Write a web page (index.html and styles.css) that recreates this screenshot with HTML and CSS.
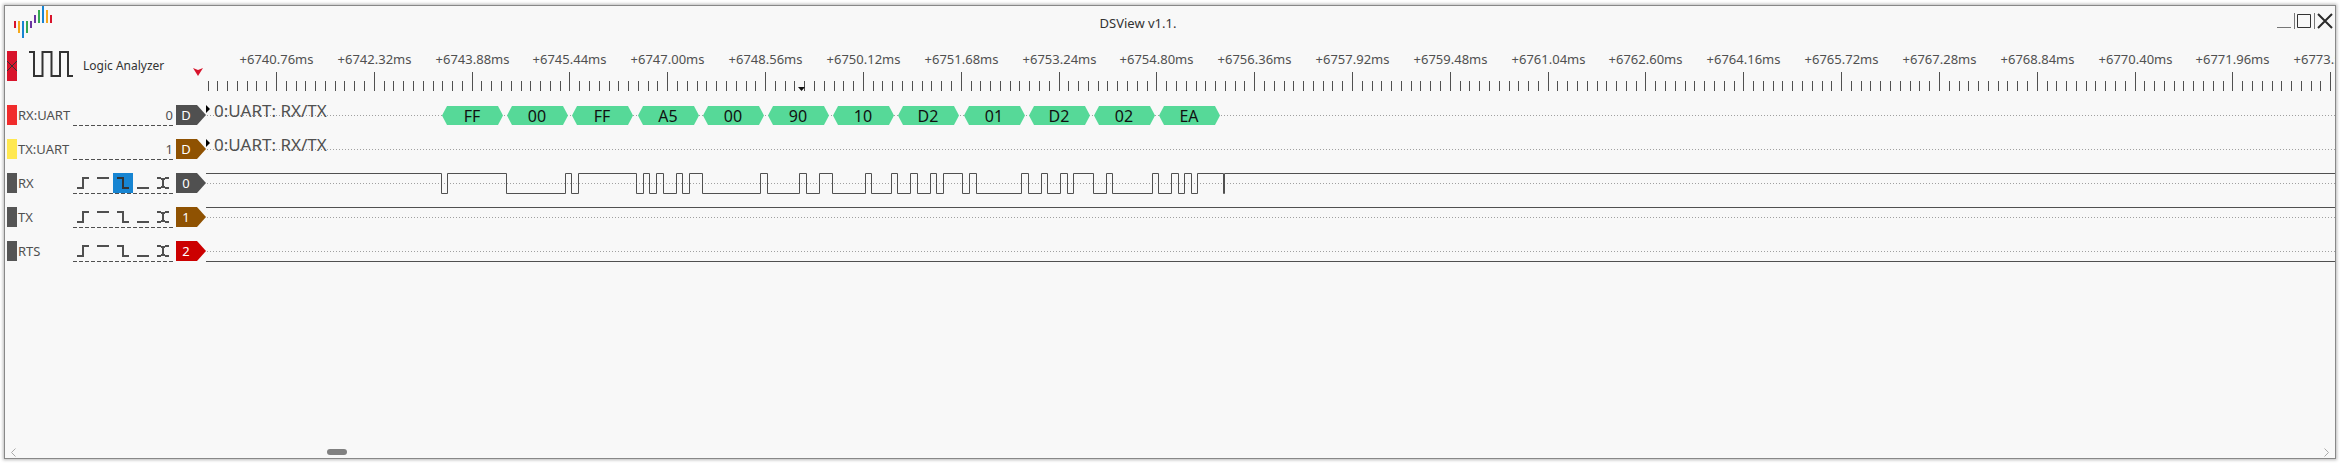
FILE: index.html
```html
<!DOCTYPE html>
<html lang="en">
<head>
<meta charset="utf-8">
<title>DSView v1.1.</title>
<link rel="stylesheet" href="styles.css">
</head>
<body>
<main class="window">
  <header class="titlebar">
    <svg class="logo" width="40" height="34" viewBox="0 0 40 34" aria-hidden="true">
      <g fill="#d8142c"><rect x="1" y="15" width="2" height="7"/><rect x="37" y="9" width="2" height="8"/></g>
      <g fill="#f5a81c"><rect x="5" y="15" width="2" height="12"/><rect x="33" y="4" width="2" height="13"/></g>
      <g fill="#1785d2"><rect x="9" y="15" width="2" height="17"/><rect x="29" y="0" width="2" height="17"/></g>
      <g fill="#34a853"><rect x="13" y="15" width="2" height="12"/><rect x="25" y="4" width="2" height="13"/></g>
      <g fill="#6a35a0"><rect x="17" y="15" width="2" height="7"/><rect x="21" y="9" width="2" height="8"/></g>
    </svg>
    <h1 class="title">DSView v1.1.</h1>
    <div class="controls">
      <button class="control" aria-label="Minimize"><svg width="16" height="18" viewBox="0 0 16 18"><path d="M0 15.5h14" stroke="#777"/></svg></button>
      <button class="control" aria-label="Maximize"><svg width="21" height="18" viewBox="0 0 21 18"><path d="M.5 1v16M20.5 1v16" stroke="#777"/><path d="M3.5 2.5h13v13h-13z" fill="none" stroke="#333"/></svg></button>
      <button class="control" aria-label="Close"><svg width="18" height="18" viewBox="0 0 18 18"><path d="M2 2l14 14M16 2L2 16" stroke="#2b2b2b" stroke-width="2"/></svg></button>
    </div>
  </header>
  <section class="ruler-row">
    <div class="device">
      <button class="device-close" aria-label="Close device"><svg width="10" height="30" viewBox="0 0 10 30"><path d="M0 10l10 10M10 10L0 20" stroke="#333"/></svg></button>
      <svg class="device-icon" width="44" height="28" viewBox="0 0 44 28" aria-hidden="true"><path d="M0 1h5v24h8.500v-24h9v24h8.500v-24h8v24h5" fill="none" stroke="#333" stroke-width="2"/></svg>
      <span class="device-name">Logic Analyzer</span>
      <svg class="marker" width="10" height="8" viewBox="0 0 10 8" aria-hidden="true"><path d="M0 0l5 2 5-2-5 8z" fill="#d8142c"/></svg>
    </div>
    <svg class="ruler" height="64" id="ruler" aria-label="Time ruler"></svg>
  </section>
  <section class="channels" id="channels"></section>
  <footer class="scrollbar">
    <button class="arrow" aria-label="Scroll left"><svg width="5" height="9" viewBox="0 0 5 9"><path d="M4.5 .5l-4 4 4 4" fill="none" stroke="#aaa"/></svg></button>
    <div class="track"><div class="thumb"></div></div>
    <button class="arrow" aria-label="Scroll right"><svg width="5" height="9" viewBox="0 0 5 9"><path d="M.5 .5l4 4-4 4" fill="none" stroke="#aaa"/></svg></button>
  </footer>
</main>
<script src="app.js"></script>
</body>
</html>
```
FILE: styles.css
```css
* { box-sizing: border-box; }
body {
  margin: 0;
  height: 100vh;
  padding: 5px 4px 4px;
  display: flex;
  background: #fff;
  font-family: "Noto Sans", "DejaVu Sans", sans-serif;
  font-size: 13px;
  color: #505050;
}
button { padding: 0; border: 0; background: none; display: block; cursor: pointer; }
svg { display: block; }
.window {
  flex: 1;
  min-width: 0;
  border: 1px solid #888;
  background: #f8f8f8;
  box-shadow: 0 0 3px 1px #bbb;
  display: flex;
  flex-direction: column;
}
.titlebar { display: grid; grid-template-columns: 1fr auto 1fr; height: 34px; padding-left: 8px; }
.title { margin: 0; padding-right: 72px; font-size: 13px; font-weight: normal; line-height: 34px; color: #333; }
.controls { display: flex; justify-content: flex-end; padding: 6px 1px 0 0; gap: 1px; align-items: flex-start; }
.ruler-row { display: flex; height: 58px; }
.device { flex: none; width: 201px; display: flex; padding-left: 2px; align-items: flex-start; }
.device-close { margin-top: 11px; width: 10px; background: #d8142c; }
.device-icon { margin: 11px 0 0 12px; }
.device-name { margin-left: 10px; font-size: 12px; line-height: 52px; color: #333; }
.marker { margin: 28px 3px 0 auto; }
.ruler { flex: 1; min-width: 0; }
.ruler text { font-size: 13px; fill: #505050; text-anchor: middle; }
.channels { flex: 1; min-height: 0; }
.channel { display: flex; height: 34px; align-items: center; }
.head { flex: none; width: 201px; display: flex; align-items: center; padding-left: 2px; }
.swatch { width: 10px; height: 20px; margin-right: 1px; }
.name { width: 55px; line-height: 20px; }
.fields {
  width: 100px;
  height: 21px;
  display: flex;
  justify-content: flex-end;
  line-height: 20px;
  background: repeating-linear-gradient(90deg, #505050 0 4px, transparent 4px 6px) bottom / 100% 1px no-repeat;
}
.edge { width: 20px; height: 20px; }
.edge.on { background: #1785d2; }
.tag {
  width: 30px;
  height: 20px;
  margin-left: 3px;
  padding-right: 10px;
  text-align: center;
  line-height: 20px;
  color: #fff;
  clip-path: polygon(0 0, 21px 0, 100% 50%, 21px 100%, 0 100%);
}
.wave { flex: 1; min-width: 0; height: 34px; }
.wave text { fill: #111; font-size: 16px; text-anchor: middle; }
.wave .decoder { fill: #505050; font-size: 17px; text-anchor: start; }
.scrollbar { display: flex; align-items: center; height: 12px; padding: 0 6px; }
.arrow { flex: none; }
.track { flex: 1; padding-left: 13.4%; }
.thumb { width: 20px; height: 6px; border-radius: 3px; background: #808080; }
```
FILE: app.js
```js
const STEP = 97.82;
const ORIGIN = 70;

const rulerSvg = document.getElementById('ruler');
const rulerWidth = rulerSvg.getBoundingClientRect().width;
let ruler = '';
for (let i = -7; ORIGIN + i * STEP / 10 < rulerWidth; i++) {
  const x = Math.round(ORIGIN + i * STEP / 10) + 0.5;
  const major = i % 10 === 0;
  ruler += `<path d="M${x} ${major ? 32 : 41}V51" stroke="#505050"/>`;
  if (major) ruler += `<text x="${x}" y="24">+${(6740.76 + i * 0.156).toFixed(2)}ms</text>`;
}
ruler += '<path d="M592 47h7l-3.500 4z" fill="#111"/>';
rulerSvg.innerHTML = ruler;

const toggles = [441,447,506,565,571,578,636,643,649,656,663,676,682,689,702,760,767,799,806,819,832,865,871,891,897,910,917,930,936,943,962,969,976,1021,1028,1041,1047,1060,1067,1073,1093,1106,1112,1152,1158,1171,1178,1184,1191,1197,1223,1224];
let high = true;
let rxPath = 'M0 7.5';
for (const t of toggles) {
  high = !high;
  rxPath += `H${t - 205.5}V${high ? 7.5 : 27.5}`;
}
rxPath += 'H8000';

const bytes = ['FF','00','FF','A5','00','90','10','D2','01','D2','02','EA'];
const packets = bytes.map((b, i) => {
  const x = Math.round(236 + i * 65.2);
  return `<path d="M${x} 17.5l5-9.5h51l5 9.5-5 9.5h-51z" fill="#56d998"/><text x="${x + 30}" y="24">${b}</text>`;
}).join('');
const decoder = '<path d="M0 7l4 4-4 4z" fill="#000"/><text class="decoder" x="8" y="19">0:UART: RX/TX</text>';
const line = d => `<path d="${d}" fill="none" stroke="#505050"/>`;

const edges = [
  ['Rising edge', 'M4 15H10V5H16'],
  ['High level', 'M4 5H16'],
  ['Falling edge', 'M4 5H10V15H16'],
  ['Low level', 'M4 15H16'],
  ['Either edge', 'M4 5H8M12 5H16M4 15H8M12 15H16M8 6H12M8 14H12M10 6V14']
];
const edgeButtons = active => edges.map(([label, d], i) =>
  `<button class="edge${i === active ? ' on' : ''}" aria-label="${label}"><svg width="20" height="20"><path d="${d}" fill="none" stroke="${i === active ? '#333' : '#505050'}" stroke-width="2"/></svg></button>`).join('');

const channels = [
  { name: 'RX:UART', swatch: '#f02c2c', field: '0', tag: 'D', color: '#505050', wave: packets + decoder },
  { name: 'TX:UART', swatch: '#ffe850', field: '1', tag: 'D', color: '#8f5202', wave: decoder },
  { name: 'RX', swatch: '#555', field: edgeButtons(2), tag: '0', color: '#505050', wave: line(rxPath) },
  { name: 'TX', swatch: '#555', field: edgeButtons(-1), tag: '1', color: '#8f5202', wave: line('M0 7.5H8000') },
  { name: 'RTS', swatch: '#555', field: edgeButtons(-1), tag: '2', color: '#cc0000', wave: line('M0 27.5H8000') }
];
document.getElementById('channels').innerHTML = channels.map(c => `
  <div class="channel">
    <div class="head">
      <span class="swatch" style="background:${c.swatch}"></span>
      <span class="name">${c.name}</span>
      <span class="fields">${c.field}</span>
      <span class="tag" style="background:${c.color}">${c.tag}</span>
    </div>
    <svg class="wave"><path d="M1 17.5H8000" stroke="#a0a0a0" stroke-dasharray="1 2"/>${c.wave}</svg>
  </div>`).join('');
```
